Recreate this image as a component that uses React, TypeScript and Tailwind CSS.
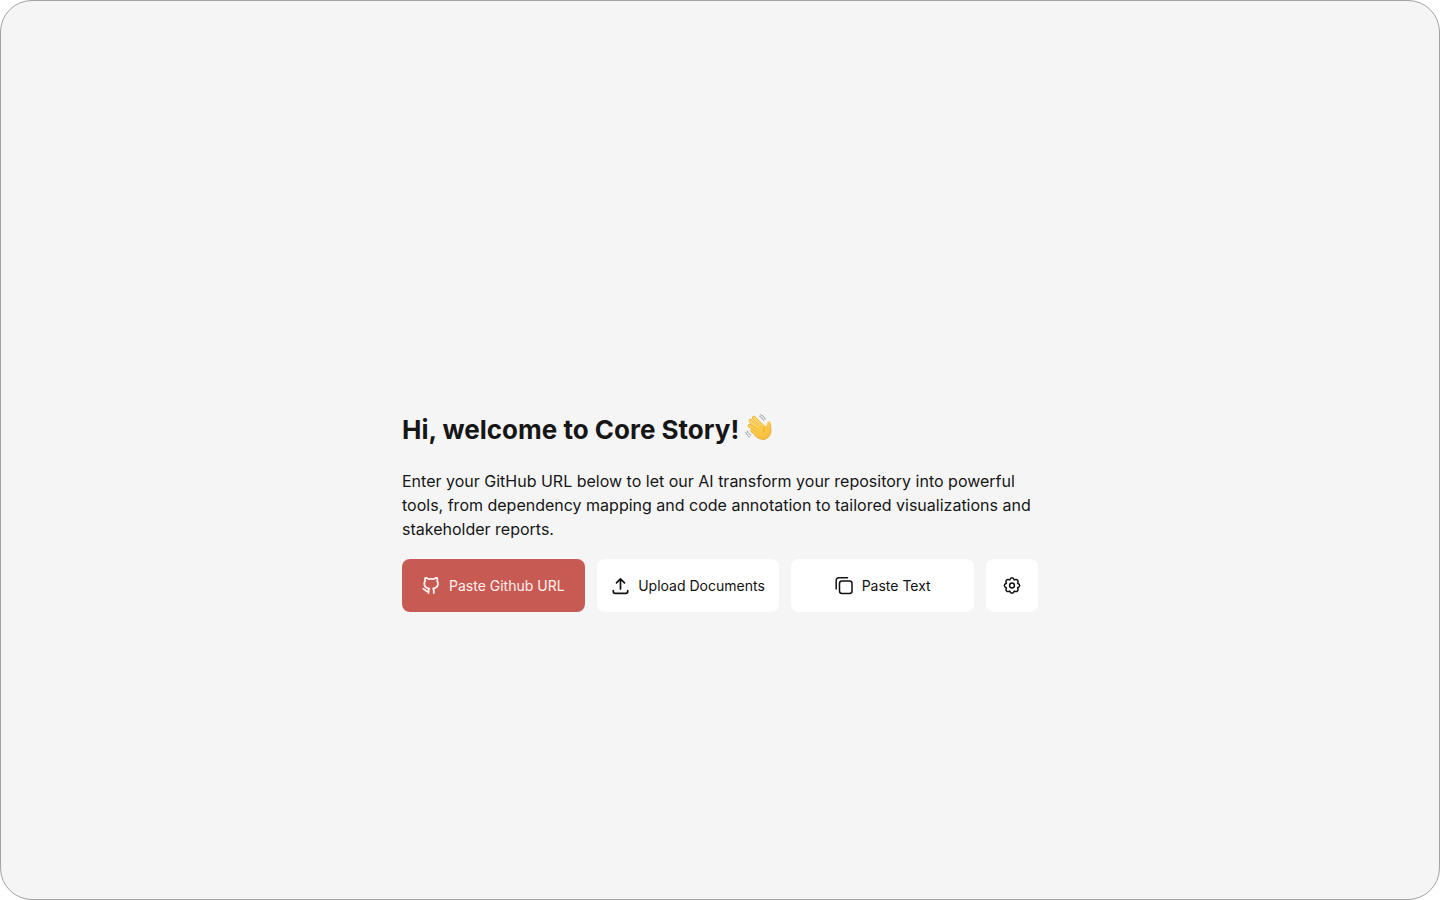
import React from 'react';
import clsx from 'clsx';

const WavingHand = () => (
    <svg width="28" height="28" viewBox="0 0 28 28" fill="none" strokeLinecap="round" strokeLinejoin="round" role="img" aria-label="Waving hand" className="mb-1">
        <defs>
            <linearGradient id="skin" x1="8" y1="3" x2="18" y2="26" gradientUnits="userSpaceOnUse">
                <stop stopColor="#ffd65c" />
                <stop offset="1" stopColor="#f9bd3c" />
            </linearGradient>
        </defs>
        {/* Fingers, back to front */}
        <path d="M9 3.800L17 12" stroke="#dfa038" strokeWidth="3.900" />
        <path d="M9 3.800L17 12" stroke="#ffd356" strokeWidth="3.100" />
        <path d="M5.600 6.900L14 15" stroke="#dfa038" strokeWidth="3.900" />
        <path d="M5.600 6.900L14 15" stroke="#ffd356" strokeWidth="3.100" />
        <path d="M4.700 11.800L13 18.500" stroke="#dfa038" strokeWidth="3.800" />
        <path d="M4.700 11.800L13 18.500" stroke="#fecf50" strokeWidth="3" />
        <path d="M7.200 16.700L13 21" stroke="#dfa038" strokeWidth="3.600" />
        <path d="M7.200 16.700L13 21" stroke="#fdc847" strokeWidth="2.800" />
        {/* Palm and thumb */}
        <path
            d="M13.500 11.500L17.500 9.500L20.800 12.500C21.900 11.500 21.900 9.500 22.500 8.200C23.300 6.800 25.400 7.100 25.600 8.800C25.900 11.500 25.500 13 26 15.500C26.700 20.500 22.700 25.500 18.200 25.500C15.300 25.500 12.300 24.200 9.300 21L11 17Z"
            fill="url(#skin)"
        />
        <path d="M25.600 10C25.900 11.500 25.500 13 26 15.500C26.700 20.500 22.700 25.500 18.200 25.500C15.300 25.500 12.300 24.200 9.300 21" stroke="#e2a02f" strokeWidth="0.700" />
        <path d="M20.800 12.500C19 13.700 18.200 15.400 18.800 17.600" stroke="#dda033" strokeWidth="0.700" />
        <path d="M14.500 2.200C16.300 3.200 17.600 4.500 18.400 6.300M15.700 0.800C18 1.800 19.600 3.400 20.300 5.300M2.300 17C2.900 18.900 4 20.200 5.800 21M0.800 18.500C1.400 20.500 2.700 22.100 4.600 23" stroke="#858b91" strokeWidth="0.900" />
    </svg>
);

const GithubIcon = () => (
    <svg width="18" height="18" viewBox="0 0 18 18" fill="none" stroke="currentColor" strokeWidth="1.800" strokeLinecap="round" strokeLinejoin="round" aria-hidden="true">
        <path d="M6.500 16V13.800C6.500 12.800 6.800 12.200 7.200 11.600C4.200 11.100 2.300 9.600 2.300 6.800C2.300 5.600 2.600 4.600 3.200 3.900C2.800 2.800 2.800 1.800 3.200 0.900C4.600 0.900 5.600 1.300 6.600 2.100C8.300 1.700 10 1.700 11.700 2.100C12.700 1.300 13.700 0.900 15.100 0.900C15.500 1.800 15.500 2.800 15.100 3.900C15.700 4.600 16 5.600 16 6.800C16 9.600 14.100 11.100 11.100 11.600C11.500 12.200 11.800 12.800 11.800 13.800V16" />
        <path d="M6.500 14.400C3.600 15.200 3.400 12.300 1.200 11.800" />
    </svg>
);

const UploadIcon = () => (
    <svg width="18" height="18" viewBox="0 0 18 18" fill="none" stroke="currentColor" strokeWidth="1.700" strokeLinecap="round" strokeLinejoin="round" aria-hidden="true">
        <path d="M9.500 12V2M5.500 5.800L9.500 1.800L13.500 5.800M2.300 13.500V14.500C2.300 15.600 3.100 16.400 4.200 16.400H14.800C15.900 16.400 16.700 15.600 16.700 14.500V13.500" />
    </svg>
);

const CopyIcon = () => (
    <svg width="18" height="18" viewBox="0 0 18 18" fill="none" stroke="currentColor" strokeWidth="1.500" strokeLinecap="round" strokeLinejoin="round" aria-hidden="true">
        <rect x="4.500" y="4" width="12.500" height="12.500" rx="2.500" />
        <path d="M1.200 12V3.300C1.200 1.900 2.300 0.800 3.700 0.800H12.500" />
    </svg>
);

const GearIcon = () => (
    <svg width="18" height="18" viewBox="0 0 18 18" fill="none" stroke="currentColor" strokeWidth="1.500" strokeLinejoin="round" aria-hidden="true">
        <path d="M6.700 2.900C7.600 0.100 10.400 0.100 11.300 2.900C13.950 1.570 15.930 3.550 14.600 6.200C17.400 7.100 17.400 9.900 14.600 10.800C15.930 13.450 13.950 15.430 11.300 14.100C10.400 16.900 7.600 16.900 6.700 14.100C4.050 15.430 2.070 13.450 3.400 10.800C0.600 9.900 0.600 7.100 3.400 6.200C2.070 3.550 4.050 1.570 6.700 2.900Z" />
        <circle cx="9" cy="8.500" r="2.400" />
    </svg>
);

interface ActionButtonProps {
    icon: React.ReactNode;
    label: string;
    primary?: boolean;
}

const ActionButton: React.FC<ActionButtonProps> = ({ icon, label, primary }) => (
    <button
        type="button"
        className={clsx(
            'flex h-[53px] min-w-0 flex-1 items-center justify-center gap-[9px] rounded-lg pt-px text-sm whitespace-nowrap',
            primary ? 'bg-[#c85a54] text-[#fff1ed]' : 'bg-white text-[#111111]'
        )}
    >
        {icon}
        <span>{label}</span>
    </button>
);

export default function App() {
    return (
        <div className="min-h-screen bg-white font-['Inter',sans-serif] text-[#161616] flex">
            <main className="flex flex-1 items-center justify-center rounded-[32px] border border-[#a3a3a3] bg-[#f5f5f5] px-6 pt-[123px]">
                <section className="w-full max-w-[636px]">
                    <h1 className="flex items-center gap-1.5 text-[26px] leading-9 font-bold">
                        Hi, welcome to Core Story!
                        <WavingHand />
                    </h1>
                    <p className="mt-[21px] text-base leading-6">
                        Enter your GitHub URL below to let our AI transform your repository into powerful tools, from
                        dependency mapping and code annotation to tailored visualizations and stakeholder reports.
                    </p>

                    <div className="mt-[18px] flex gap-3">
                        <ActionButton primary icon={<GithubIcon />} label="Paste Github URL" />
                        <ActionButton icon={<UploadIcon />} label="Upload Documents" />
                        <ActionButton icon={<CopyIcon />} label="Paste Text" />
                        <button
                            type="button"
                            aria-label="Settings"
                            className="flex h-[53px] w-[52px] items-center justify-center rounded-lg bg-white pt-px text-[#111111]"
                        >
                            <GearIcon />
                        </button>
                    </div>
                </section>
            </main>
        </div>
    );
}
